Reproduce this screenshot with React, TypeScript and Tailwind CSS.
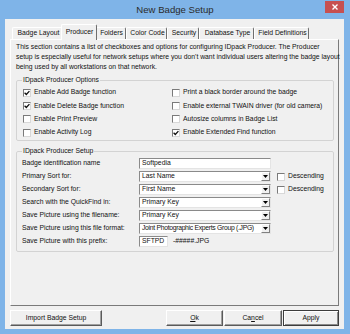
import { ReactNode } from 'react'

const font = { fontFamily: '"Liberation Sans", Arial, sans-serif' }

function Check({ checked }: { checked?: boolean }) {
  return (
    <span className="w-[8px] h-[8px] shrink-0 bg-white border border-t-[#7a7a7a] border-l-[#7a7a7a] border-b-[#d8d8d8] border-r-[#d8d8d8] flex items-center justify-center">
      {checked && (
        <svg viewBox="0 0 6 6" className="w-[6px] h-[6px]">
          <path d="M0.6 2.8 L2.3 4.5 L5.4 1.1" stroke="#111" strokeWidth="1.3" fill="none" />
        </svg>
      )}
    </span>
  )
}

function Option({ label, checked }: { label: string; checked?: boolean }) {
  return (
    <div className="h-[13.3px] flex items-center gap-[2px]">
      <Check checked={checked} />
      <span className="ml-[1px]">{label}</span>
    </div>
  )
}

function Field({ children }: { children: ReactNode }) {
  return (
    <div className="w-[132px] h-[11px] bg-white border border-t-[#8a8a8a] border-l-[#8a8a8a] border-b-[#e4e4e4] border-r-[#e4e4e4] flex items-center">
      {children}
    </div>
  )
}

function Combo({ value, tight }: { value: string; tight?: boolean }) {
  return (
    <Field>
      <span className={`flex-1 pl-[2px] whitespace-nowrap overflow-hidden ${tight ? 'tracking-[-0.3px]' : ''}`}>
        {value}
      </span>
      <span className="w-[9px] h-[9px] shrink-0 bg-[#f0f0f0] border border-t-white border-l-white border-b-[#808080] border-r-[#808080] flex items-center justify-center">
        <svg viewBox="0 0 5 3" className="w-[5px] h-[3px]">
          <path d="M0 0 H5 L2.5 3 Z" fill="#000" />
        </svg>
      </span>
    </Field>
  )
}

function Row({ label, children }: { label: string; children: ReactNode }) {
  return (
    <div className="h-[13px] flex items-center">
      <span className="w-[117px] shrink-0">{label}</span>
      {children}
    </div>
  )
}

function Descending() {
  return (
    <div className="flex items-center ml-[6px] gap-[3px]">
      <Check />
      <span>Descending</span>
    </div>
  )
}

function Tab({ label, className, selected }: { label: string; className: string; selected?: boolean }) {
  return (
    <div
      className={
        selected
          ? `${className} h-[16px] -mx-[2px] mb-[-1px] relative z-10 bg-[#f0f0f0] border-l border-t border-r border-l-white border-t-white border-r-[#6f6f6f] rounded-t-[2px] flex items-center justify-center pl-[1px]`
          : `${className} h-[12px] border-l border-t border-r border-l-white border-t-white border-r-[#6f6f6f] rounded-t-[2px] flex items-center justify-center pl-[2px]`
      }
    >
      {label}
    </div>
  )
}

function Button({ children, className, isDefault }: { children: ReactNode; className: string; isDefault?: boolean }) {
  return (
    <div
      className={`${className} h-[16px] flex items-center justify-center bg-[#f0f0f0] border ${
        isDefault
          ? 'border-[#3c3c3c] shadow-[inset_1px_1px_0_#fff,inset_-1px_-1px_0_#8a8a8a]'
          : 'border-t-white border-l-white border-b-[#5a5a5a] border-r-[#5a5a5a] shadow-[inset_-1px_-1px_0_#a0a0a0]'
      }`}
    >
      {children}
    </div>
  )
}

export default function App() {
  return (
    <div className="w-[350px] h-[334px] bg-[#7fb4e8] text-[6.8px] text-[#111] leading-none" style={font}>
      <div className="h-[19px] flex items-start relative">
        <div className="flex-1 h-[19px] flex items-center justify-center text-[9.6px] text-[#2b2b2b]">
          New Badge Setup
        </div>
        <div className="absolute right-[6px] top-[1px] w-[19px] h-[12px] bg-[#c75050] flex items-center justify-center">
          <svg viewBox="0 0 6 6" className="w-[6px] h-[6px]">
            <path d="M0.5 0.5 L5.5 5.5 M5.5 0.5 L0.5 5.5" stroke="#fff" strokeWidth="1.4" />
          </svg>
        </div>
      </div>

      <div className="ml-[5px] w-[339px] h-[310px] bg-[#f0f0f0] pt-[5px] px-[5px] flex flex-col">
        <div className="h-[15px] flex items-end pl-[2px]">
          <Tab label="Badge Layout" className="w-[51px]" />
          <Tab label="Producer" className="w-[36px]" selected />
          <Tab label="Folders" className="w-[31px]" />
          <Tab label="Color Code" className="w-[41px]" />
          <Tab label="Security" className="w-[32px]" />
          <Tab label="Database Type" className="w-[55px]" />
          <Tab label="Field Definitions" className="w-[55px]" />
        </div>

        <div className="w-[329px] h-[267px] border border-t-white border-l-white border-r-[#7a7a7a] border-b-[#7a7a7a] pl-[5px] pt-[2px]">
          <p className="leading-[10px] whitespace-nowrap">
            This section contains a list of checkboxes and options for configuring IDpack Producer. The Producer
            <br />
            setup is especially useful for network setups where you don't want individual users altering the badge layout
            <br />
            being used by all workstations on that network.
          </p>

          <fieldset className="w-[318px] mt-[3px] border border-[#d3d3d3] rounded-[2px] pl-[6px] pb-[1px]">
            <legend className="ml-[-1px] px-[1px] leading-[10px]">IDpack Producer Options</legend>
            <div className="flex pt-[1px]">
              <div className="w-[149px]">
                <Option label="Enable Add Badge function" checked />
                <Option label="Enable Delete Badge function" checked />
                <Option label="Enable Print Preview" />
                <Option label="Enable Activity Log" />
              </div>
              <div>
                <Option label="Print a black border around the badge" />
                <Option label="Enable external TWAIN driver (for old camera)" />
                <Option label="Autosize columns in Badge List" />
                <Option label="Enable Extended Find function" checked />
              </div>
            </div>
          </fieldset>

          <fieldset className="w-[318px] mt-[5px] border border-[#d3d3d3] rounded-[2px] pl-[5px] pb-[3px]">
            <legend className="px-[1px] leading-[10px]">IDpack Producer Setup</legend>
            <div className="pt-[1px]">
              <Row label="Badge identification name">
                <Field>
                  <span className="pl-[2px]">Softpedia</span>
                </Field>
              </Row>
              <Row label="Primary Sort for:">
                <Combo value="Last Name" />
                <Descending />
              </Row>
              <Row label="Secondary Sort for:">
                <Combo value="First Name" />
                <Descending />
              </Row>
              <Row label="Search with the QuickFind in:">
                <Combo value="Primary Key" />
              </Row>
              <Row label="Save Picture using the filename:">
                <Combo value="Primary Key" />
              </Row>
              <Row label="Save Picture using this file format:">
                <Combo value="Joint Photographic Experts Group (.JPG)" tight />
              </Row>
              <Row label="Save Picture with this prefix:">
                <div className="w-[29px] h-[11px] bg-white border border-t-[#8a8a8a] border-l-[#8a8a8a] border-b-[#e4e4e4] border-r-[#e4e4e4] flex items-center pl-[2px]">
                  SFTPD
                </div>
                <span className="ml-[5px]">-#####.JPG</span>
              </Row>
            </div>
          </fieldset>
        </div>

        <div className="mt-[4px] flex">
          <Button className="w-[92px]">Import Badge Setup</Button>
          <div className="flex-1" />
          <Button className="w-[57px]">
            <span className="underline">O</span>k
          </Button>
          <Button className="w-[58px] ml-[1px]">
            Ca<span className="underline">n</span>cel
          </Button>
          <Button className="w-[56px] ml-[1px]" isDefault>
            Apply
          </Button>
        </div>
      </div>
    </div>
  )
}
